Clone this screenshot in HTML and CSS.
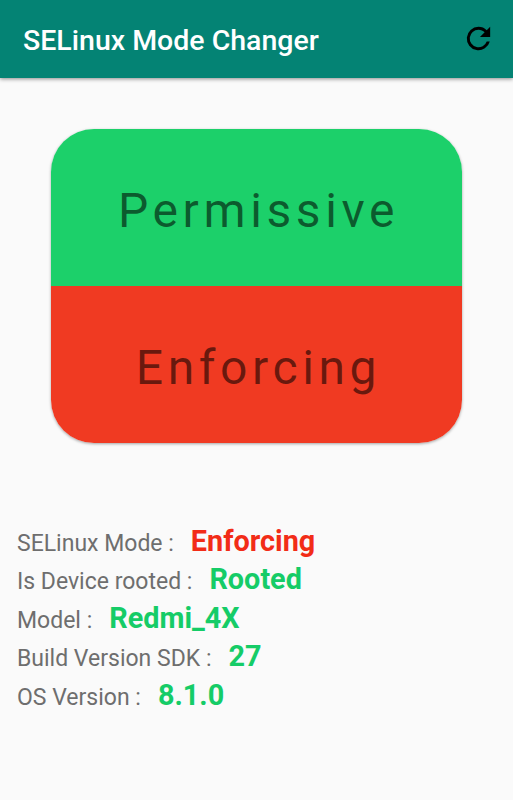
FILE: index.html
```html
<!DOCTYPE html>
<html lang="en">
<head>
  <meta charset="UTF-8" />
  <meta name="viewport" content="width=device-width, initial-scale=1.0" />
  <title>SELinux Mode Changer</title>
  <link rel="stylesheet" href="styles.css">
</head>
<body>
  <header class="toolbar">
    <h1>SELinux Mode Changer</h1>
    <button class="refresh" aria-label="Refresh">
      <svg viewBox="0 0 24 24" width="35" height="35">
        <path d="M17.65 6.35A7.958 7.958 0 0 0 12 4a8 8 0 1 0 7.73 10h-2.08A6 6 0 1 1 12 6c1.66 0 3.14.69 4.22 1.78L13 11h7V4z" />
      </svg>
    </button>
  </header>

  <main>
    <div class="card">
      <button class="mode permissive">Permissive</button>
      <button class="mode enforcing">Enforcing</button>
    </div>

    <ul class="info">
      <li><span>SELinux Mode :</span> <b class="red">Enforcing</b></li>
      <li><span>Is Device rooted :</span> <b>Rooted</b></li>
      <li><span>Model :</span> <b>Redmi_4X</b></li>
      <li><span>Build Version SDK :</span> <b>27</b></li>
      <li><span>OS Version :</span> <b>8.1.0</b></li>
    </ul>
  </main>
</body>
</html>
```
FILE: styles.css
```css
:root {
  --primary: #048374;
  --bg: #fafafa;
  --green: #1cd06a;
  --red: #f03a22;
}

body {
  margin: 0;
  min-height: 100vh;
  background: var(--bg);
  font-family: Roboto, sans-serif;
}

button {
  border: none;
  padding: 0;
  font-family: inherit;
  cursor: pointer;
}

.toolbar {
  display: flex;
  align-items: center;
  justify-content: space-between;
  box-sizing: border-box;
  height: 78px;
  padding: 0 17px 2px 23px;
  background: var(--primary);
  box-shadow: 0 1px 4px rgba(0, 0, 0, 0.45);
}

h1 {
  margin: 5px 0 0;
  color: white;
  font-size: 28.5px;
  font-weight: 500;
}

.refresh {
  display: flex;
  background: none;
}

.card {
  display: flex;
  flex-direction: column;
  width: 411px;
  height: 314px;
  margin: 51px auto 0;
  border-radius: 43px;
  overflow: hidden;
  box-shadow: 0 1px 3px rgba(0, 0, 0, 0.35);
}

.mode {
  flex: 1;
  padding: 6px 0 0 4px;
  color: rgba(0, 0, 0, 0.57);
  font-size: 48px;
  letter-spacing: 4.6px;
}

.permissive {
  background: var(--green);
}

.enforcing {
  background: var(--red);
}

.info {
  list-style: none;
  margin: 79px 0 0;
  padding: 0 17px;
}

.info li {
  display: flex;
  align-items: baseline;
  gap: 17px;
  height: 38.4px;
  line-height: 38px;
}

.info span {
  color: #6e6e6e;
  font-size: 23px;
}

.info b {
  color: #15cc67;
  font-size: 28.8px;
}

.info .red {
  color: #f22c17;
}
```
